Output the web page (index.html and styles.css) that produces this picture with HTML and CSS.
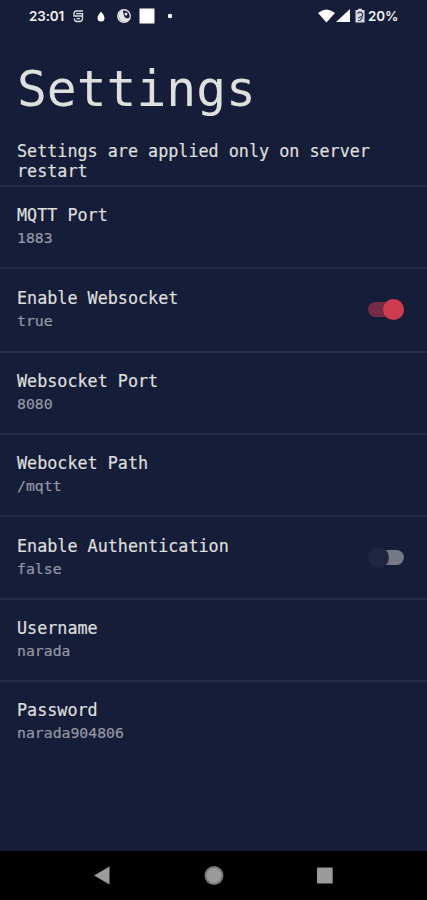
FILE: index.html
```html
<!DOCTYPE html>
<html lang="en">
<head>
<meta charset="utf-8">
<title>Settings</title>
<link rel="stylesheet" href="styles.css">
</head>
<body>
<div class="screen">
  <header class="status">
    <span class="clock">23:01</span>
    <svg class="status-icons" width="102" height="18" viewBox="0 0 102 18" fill="none">
      <path d="M11 4H4.200Q2 4 2 6.500V9H10.500V11.500Q10.500 14.500 7.500 14.500H5Q2.300 14.500 2.300 11.500M4 6.700H10.500V9M4.500 11.700H8" stroke="#dcdee3" stroke-width="1.300"/>
      <path d="M29 4.500C29 4.500 25.500 8.500 25.500 11a3.500 3.500 0 0 0 7 0C32.500 8.500 29 4.500 29 4.500Z" fill="#fff"/>
      <circle cx="52" cy="9" r="6.200" stroke="#e4e5e9" stroke-width="1.400"/>
      <path d="M51 3a6 6 0 0 0 2 11.700c3 0 5-2 5.500-4-2 1-5 1-6-1S51 5 51 3Z" fill="#e4e5e9"/>
      <circle cx="54" cy="7" r="1.500" fill="#e4e5e9"/>
      <path d="M47 6v4l2 3" stroke="#e4e5e9"/>
      <rect x="67.500" y="1.500" width="15" height="15" fill="#fff"/>
      <circle cx="98" cy="9" r="2.200" fill="#fff"/>
    </svg>
    <svg class="signal-icons" width="48" height="18" viewBox="0 0 48 18">
      <path d="M0 6Q8.500-1 17 6L8.500 15.500Z" fill="#fff"/>
      <path d="M32 2V15H18Z" fill="#fff"/>
      <path d="M40 3V1.800h4V3h2.500v12.500h-9V3Z" fill="#d8dae0"/>
      <path d="M39.500 6.500Q42 4 44.500 6.500V9L40 11M44.500 10.500 42 13.500H40" fill="none" stroke="#3c425a" stroke-width="1.200"/>
    </svg>
    <span class="battery">20%</span>
  </header>
  <main>
    <h1>Settings</h1>
    <p class="note">Settings are applied only on server restart</p>
    <ul class="list">
      <li class="row"><div><div class="name">MQTT Port</div><div class="value">1883</div></div></li>
      <li class="row tall"><div><div class="name">Enable Websocket</div><div class="value">true</div></div><span class="switch on"></span></li>
      <li class="row"><div><div class="name">Websocket Port</div><div class="value">8080</div></div></li>
      <li class="row"><div><div class="name">Webocket Path</div><div class="value">/mqtt</div></div></li>
      <li class="row tall"><div><div class="name">Enable Authentication</div><div class="value">false</div></div><span class="switch"></span></li>
      <li class="row"><div><div class="name">Username</div><div class="value">narada</div></div></li>
      <li class="row"><div><div class="name">Password</div><div class="value">narada904806</div></div></li>
    </ul>
  </main>
  <nav class="navbar">
    <svg width="427" height="49" viewBox="0 0 427 49" fill="#9b9b9b">
      <path d="M94 24.500 109.500 15.500V33.500Z"/>
      <circle cx="214" cy="24.500" r="9.500" fill="#777"/>
      <circle cx="214" cy="24.500" r="7.500"/>
      <rect x="317" y="16.500" width="15.700" height="16" rx="1"/>
    </svg>
  </nav>
</div>
</body>
</html>
```

FILE: styles.css
```css
* { box-sizing: border-box; }
body { margin: 0; background: #161d38; }
.screen {
  width: 427px;
  height: 900px;
  display: flex;
  flex-direction: column;
  overflow: hidden;
  background: #161d38;
  color: #dedfdf;
  font-family: "DejaVu Sans Mono", monospace;
}
.status {
  height: 32px;
  padding: 0 28px 0 29px;
  display: flex;
  align-items: center;
  color: #f2f3f5;
  font: 600 13.4px/32px Inter, sans-serif;
}
.clock { width: 43px; letter-spacing: -0.1px; }
.signal-icons { margin-left: auto; }
.battery { width: 31px; margin-left: 2px; letter-spacing: -0.1px; }
main { flex: 1; }
h1 {
  margin: 27px 0 0 17px;
  font-size: 49.6px;
  line-height: 60px;
  font-weight: 400;
}
.note {
  height: 66px;
  margin: 0;
  padding: 23px 17px 0;
  font-size: 16.75px;
  line-height: 19.500px;
  -webkit-text-stroke: 0.2px currentColor;
}
.list { margin: 0; padding: 0; list-style: none; }
.row {
  height: 82px;
  padding: 17px 23px 0 17px;
  display: flex;
  justify-content: space-between;
  border-top: 2px solid #272d49;
}
.row.tall { height: 83.500px; padding-top: 18px; }
.name { font-size: 16.75px; line-height: 23px; -webkit-text-stroke: 0.2px currentColor; }
.value { color: #9598a5; font-size: 14.8px; line-height: 22.500px; -webkit-text-stroke: 0.2px currentColor; }
.switch {
  position: relative;
  width: 36px;
  height: 15px;
  margin-top: 15px;
  border-radius: 8px;
  background: linear-gradient(90deg, transparent 8px, #747887 8px);
}
.switch::after {
  content: "";
  position: absolute;
  left: 0;
  top: -3px;
  width: 21px;
  height: 21px;
  border-radius: 50%;
  background: #202641;
}
.switch.on { background: #752b45; }
.switch.on::after { left: 15px; background: #cf3c50; }
.navbar { height: 49px; background: #000; }
.navbar svg { display: block; }
```
